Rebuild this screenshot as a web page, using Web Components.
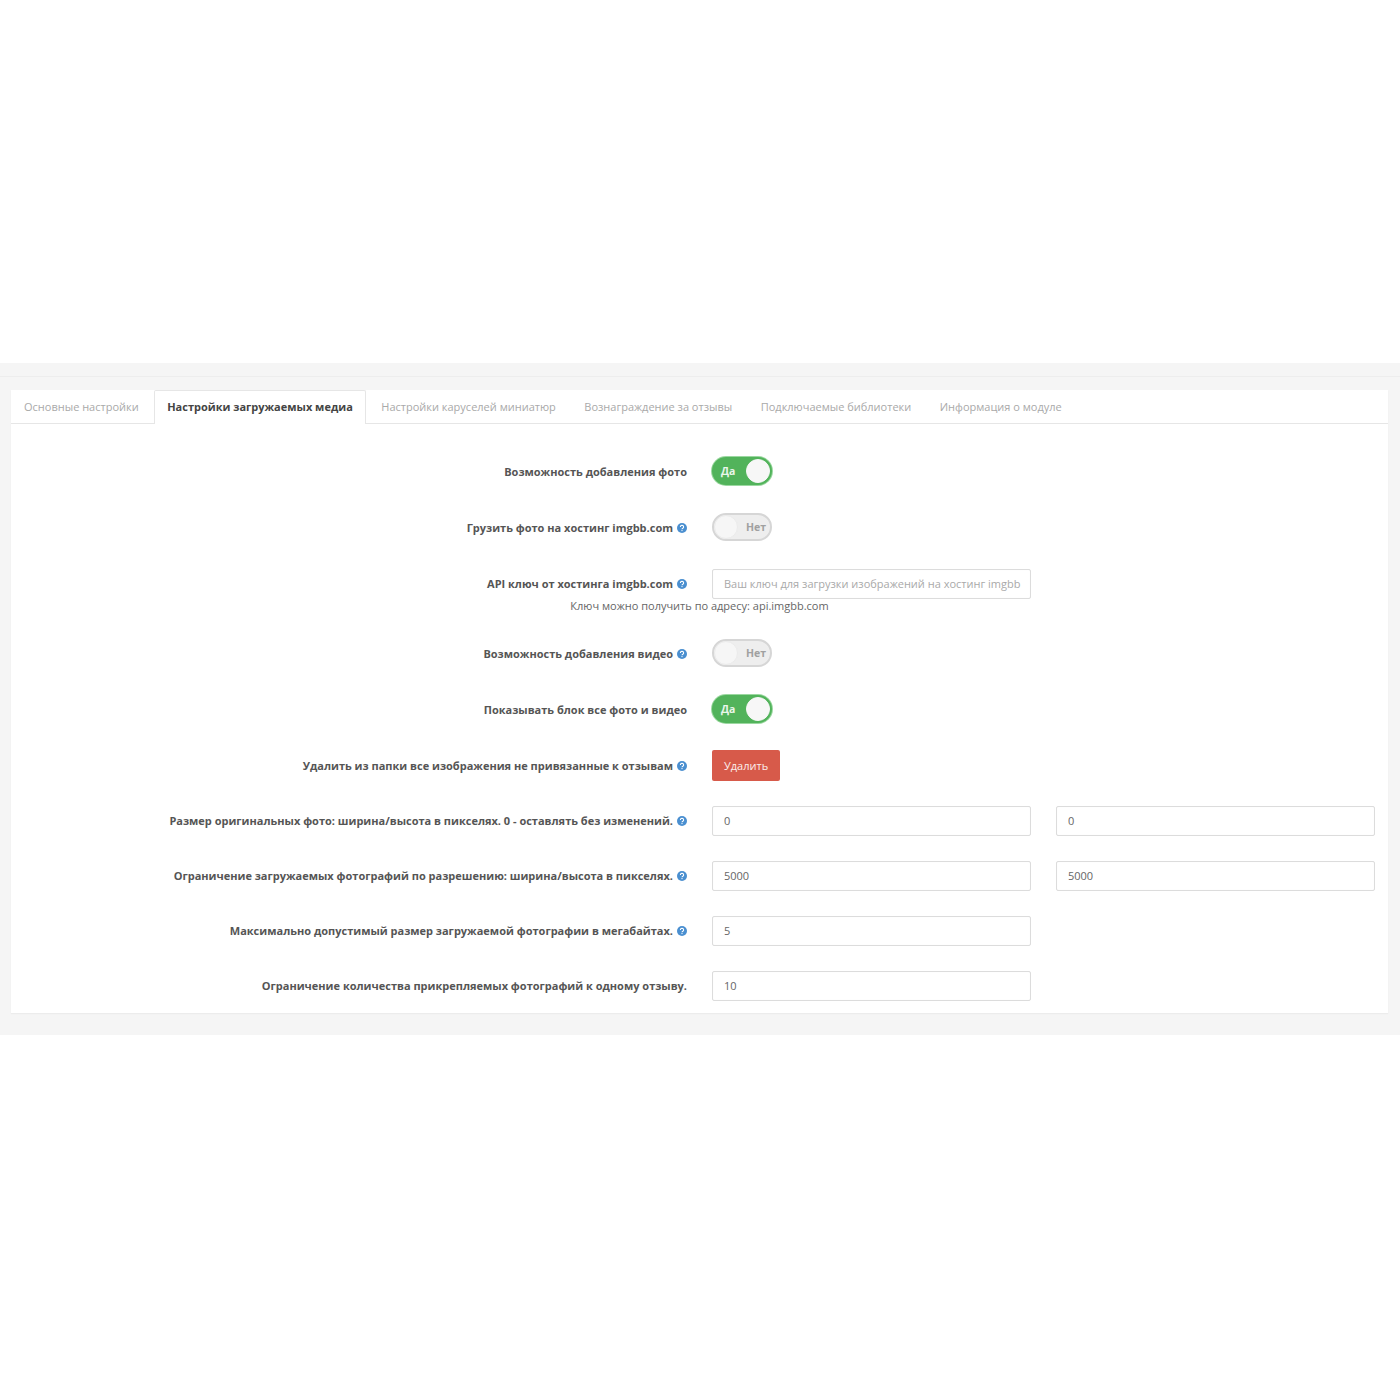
<!DOCTYPE html>
<html lang="ru"><head><meta charset="utf-8"><title>Настройки</title>
<style>
html,body{margin:0;padding:0;background:#fff}
body{font:11px/14px "Open Sans",sans-serif;color:#555}
</style></head><body>
<template id="t-page"><style>
:host{display:block;padding-top:363px;height:1037px;box-sizing:border-box}
.band{background:#f5f5f5;height:672px;box-sizing:border-box;padding:27px 12px 0 11px;position:relative}
.line{height:1px;background:#ededed;margin:-14px -12px 13px -11px}
.card{background:#fff;height:623px;box-shadow:0 1px 1px #ececec}
.body{display:grid;row-gap:25px;padding-top:32px}
</style><div class="band"><div class="line"></div><div class="card"><slot name="tabs"></slot><div class="body"><slot></slot></div></div></div></template>

<template id="t-tabs"><style>
:host{display:flex;height:34px;box-sizing:border-box;border-bottom:1px solid #e6e6e6;align-items:stretch}
</style><slot></slot></template>

<template id="t-tab"><style>
:host{display:block;padding:10px 13px 0;box-sizing:border-box;height:34px;color:#a9a9a9;font-size:11px;line-height:14px;margin-right:2.5px;white-space:nowrap}
:host([active]){color:#444;font-weight:700;background:#fff;border:1px solid #e6e6e6;border-bottom:0;height:34px;padding:9px 12px 0 12px;border-radius:2px 2px 0 0;margin-right:2.5px}
</style><slot></slot></template>

<template id="t-row"><style>
:host{display:block}
.r{display:grid;grid-template-columns:676px 319px 25px 319px;column-gap:0;align-items:center}
.l{text-align:right;font-weight:700;color:#555;font-size:11px;line-height:14px;white-space:nowrap;display:flex;justify-content:flex-end;align-items:center;gap:4px}
.c{margin-left:25px;grid-column:2;display:flex;width:319px}
.c2{grid-column:4;margin-left:25px;display:flex;width:319px}
.hint{text-align:center;color:#666;font-size:11px;line-height:14px}
</style><div class="r"><div class="l"><slot name="label"></slot></div><div class="c"><slot></slot></div><div class="c2"><slot name="second"></slot></div></div><div class="hint"><slot name="hint"></slot></div></template>

<template id="t-help"><style>
:host{display:inline-block;width:10px;height:10px;flex:none}
svg{display:block}
</style><svg width="10" height="10" viewBox="0 0 10 10"><circle cx="5" cy="5" r="5" fill="#4a8fd0"/><path d="M3.4 3.9a1.6 1.5 0 1 1 2.4 1.3c-.5.3-.8.5-.8 1" fill="none" stroke="#fff" stroke-width="1.1"/><circle cx="5" cy="7.6" r=".7" fill="#fff"/></svg></template>

<template id="t-switch"><style>
:host{display:block;width:60px;height:28px;box-sizing:border-box;border-radius:14px;position:relative;font-size:10.5px;font-weight:700;line-height:24px;background:#eeeeee;border:2px solid #d6d6d6;color:#a0a0a0;margin:1px 0 2px 0}
:host([on]){background:#52b35b;border-color:#52b35b;color:#e9f6ea;box-shadow:0 0 0 1px #9bd8a0}
.k{position:absolute;top:0;left:0;width:24px;height:24px;box-sizing:border-box;border-radius:50%;background:#f6f6f6;border:1px solid #ebebeb}
:host([on]) .k{left:auto;right:0;background:#f7f7f7;border-color:#f7f7f7}
.t{position:absolute;right:4px;top:0}
:host([on]) .t{right:auto;left:7px}
</style><span class="k"></span><span class="t"><slot></slot></span></template>

<template id="t-field"><style>
:host{display:block;width:319px}
input{display:block;width:100%;height:30px;box-sizing:border-box;border:1px solid #dcdcdc;border-radius:2px;padding:0 8px 1px 11px;font:11px "Open Sans",sans-serif;color:#666;background:#fff;outline:0;box-shadow:inset 0 0 1px #eee}
input::placeholder{color:#a9a9a9;opacity:1}
:host([shift]){margin-top:1px}
</style><input></template>

<template id="t-btn"><style>
:host{display:block;background:#d75a4a;color:#fbeeec;height:31px;box-sizing:border-box;padding:9px 12px 0;border-radius:2px;font-size:11px;line-height:14px}
</style><slot></slot></template>

<script>
function def(name,tid,after){customElements.define(name,class extends HTMLElement{constructor(){super();this.attachShadow({mode:'open'}).appendChild(document.getElementById(tid).content.cloneNode(true));}connectedCallback(){after&&after(this)}})}
def('x-page','t-page');def('x-tabs','t-tabs');def('x-tab','t-tab');def('x-row','t-row');def('x-help','t-help');def('x-switch','t-switch');def('x-btn','t-btn');
def('x-field','t-field',el=>{const i=el.shadowRoot.querySelector('input');if(el.hasAttribute('value'))i.value=el.getAttribute('value');if(el.hasAttribute('placeholder'))i.placeholder=el.getAttribute('placeholder');});
</script>

<x-page>
<x-tabs slot="tabs"><x-tab>Основные настройки</x-tab><x-tab active>Настройки загружаемых медиа</x-tab><x-tab>Настройки каруселей миниатюр</x-tab><x-tab>Вознаграждение за отзывы</x-tab><x-tab>Подключаемые библиотеки</x-tab><x-tab>Информация о модуле</x-tab></x-tabs>
<x-row><span slot="label">Возможность добавления фото</span><x-switch on>Да</x-switch></x-row>
<x-row><span slot="label">Грузить фото на хостинг imgbb.com</span><x-help slot="label"></x-help><x-switch>Нет</x-switch></x-row>
<x-row><span slot="label">API ключ от хостинга imgbb.com</span><x-help slot="label"></x-help><x-field shift placeholder="Ваш ключ для загрузки изображений на хостинг imgbb"></x-field><span slot="hint">Ключ можно получить по адресу: api.imgbb.com</span></x-row>
<x-row><span slot="label">Возможность добавления видео</span><x-help slot="label"></x-help><x-switch>Нет</x-switch></x-row>
<x-row><span slot="label">Показывать блок все фото и видео</span><x-switch on>Да</x-switch></x-row>
<x-row><span slot="label">Удалить из папки все изображения не привязанные к отзывам</span><x-help slot="label"></x-help><x-btn>Удалить</x-btn></x-row>
<x-row><span slot="label">Размер оригинальных фото: ширина/высота в пикселях. 0 - оставлять без изменений.</span><x-help slot="label"></x-help><x-field value="0"></x-field><x-field slot="second" value="0"></x-field></x-row>
<x-row><span slot="label">Ограничение загружаемых фотографий по разрешению: ширина/высота в пикселях.</span><x-help slot="label"></x-help><x-field value="5000"></x-field><x-field slot="second" value="5000"></x-field></x-row>
<x-row><span slot="label">Максимально допустимый размер загружаемой фотографии в мегабайтах.</span><x-help slot="label"></x-help><x-field value="5"></x-field></x-row>
<x-row><span slot="label">Ограничение количества прикрепляемых фотографий к одному отзыву.</span><x-field value="10"></x-field></x-row>
</x-page>
</body></html>
